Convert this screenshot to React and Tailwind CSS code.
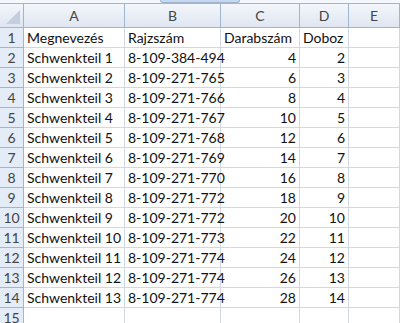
import React from 'react';

const rows = [
  ['Megnevezés', 'Rajzszám', 'Darabszám', 'Doboz'],
  ['Schwenkteil 1', '8-109-384-494', 4, 2],
  ['Schwenkteil 2', '8-109-271-765', 6, 3],
  ['Schwenkteil 3', '8-109-271-766', 8, 4],
  ['Schwenkteil 4', '8-109-271-767', 10, 5],
  ['Schwenkteil 5', '8-109-271-768', 12, 6],
  ['Schwenkteil 6', '8-109-271-769', 14, 7],
  ['Schwenkteil 7', '8-109-271-770', 16, 8],
  ['Schwenkteil 8', '8-109-271-772', 18, 9],
  ['Schwenkteil 9', '8-109-271-772', 20, 10],
  ['Schwenkteil 10', '8-109-271-773', 22, 11],
  ['Schwenkteil 11', '8-109-271-774', 24, 12],
  ['Schwenkteil 12', '8-109-271-774', 26, 13],
  ['Schwenkteil 13', '8-109-271-774', 28, 14],
  ['', '', '', ''],
];

const cols = ['A', 'B', 'C', 'D', 'E'];
const grid = 'grid grid-cols-[24px_101px_96px_79px_49px_1fr]';

export default function App() {
  return (
    <div className="w-[400px] h-[323px] overflow-hidden bg-white font-['Lato',sans-serif] text-[14px] text-[#111]">
      {/* strip above the sheet */}
      <div className="h-[3px] bg-[#f4f7fb] flex">
        <div className="ml-[160px] w-[80px] h-[3px] bg-[#c7d8ee] border-x border-b border-[#9fb4d0] rounded-b-[6px]" />
      </div>

      {/* column headers */}
      <div className={`${grid} h-[25px] border-t border-[#9eb6ce]`}>
        <div className="relative bg-gradient-to-b from-[#f3f6fb] to-[#dfe6f1] border-r border-b border-[#9eb6ce]">
          <svg className="absolute right-[3px] bottom-[3px]" width="14" height="14" viewBox="0 0 14 14">
            <polygon points="14,0 14,14 0,14" fill="#c3cfdf" />
          </svg>
        </div>
        {cols.map((c) => (
          <div
            key={c}
            className="flex items-center justify-center bg-gradient-to-b from-[#f3f6fb] to-[#dfe6f1] border-r border-b border-[#9eb6ce] text-[#444] leading-none"
          >
            {c}
          </div>
        ))}
      </div>

      {/* rows */}
      {rows.map((r, i) => (
        <div key={i} className={`${grid} h-[20px]`}>
          <div className="flex items-center justify-center pt-[1px] bg-[#e4ecf7] border-r border-b border-[#9eb6ce] text-[#444] leading-none">
            {i + 1}
          </div>
          <div className="flex items-center pt-[1px] px-[3px] border-r border-b border-[#d0d7e5] whitespace-nowrap leading-none">
            {r[0]}
          </div>
          <div className="flex items-center pt-[1px] px-[3px] border-r border-b border-[#d0d7e5] whitespace-nowrap leading-none">
            {r[1]}
          </div>
          <div
            className={`flex items-center pt-[1px] px-[3px] border-r border-b border-[#d0d7e5] whitespace-nowrap leading-none ${
              i === 0 ? 'justify-start' : 'justify-end'
            }`}
          >
            {r[2]}
          </div>
          <div
            className={`flex items-center pt-[1px] px-[3px] border-r border-b border-[#d0d7e5] whitespace-nowrap leading-none ${
              i === 0 ? 'justify-start' : 'justify-end'
            }`}
          >
            {r[3]}
          </div>
          <div className="border-r border-b border-[#d0d7e5]" />
        </div>
      ))}
    </div>
  );
}
